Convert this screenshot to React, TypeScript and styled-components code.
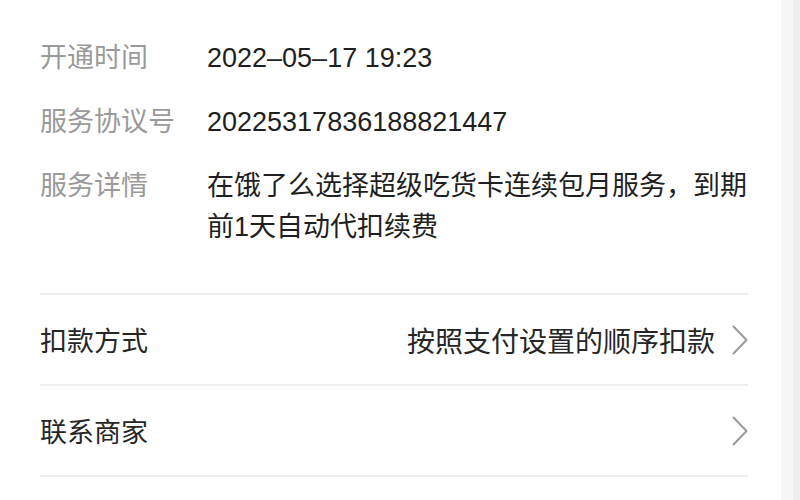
import React from "react";
import styled, { createGlobalStyle } from "styled-components";

const GlobalStyle = createGlobalStyle`
  html, body {
    margin: 0;
    padding: 0;
    background: #ffffff;
  }
  body {
    font-family: "Liberation Sans", "Noto Sans CJK SC", sans-serif;
    -webkit-font-smoothing: antialiased;
  }
`;

const Screen = styled.div`
  display: flex;
  width: 800px;
  height: 500px;
  overflow: hidden;
  background: #ffffff;
`;

const Page = styled.main`
  flex: 1;
  display: flex;
  flex-direction: column;
  padding: 38px 0 0 40px;
  box-sizing: border-box;
`;

const Content = styled.div`
  width: 708px;
  display: flex;
  flex-direction: column;
`;

const InfoList = styled.dl`
  margin: 0;
  padding: 0 0 45px;
  display: grid;
  grid-template-columns: 167px 1fr;
  row-gap: 23px;
  border-bottom: 2px solid #eeeeee;
`;

const InfoLabel = styled.dt`
  margin: 0;
  font-size: 27px;
  line-height: 41px;
  color: #9a9a9a;
`;

const InfoValue = styled.dd`
  margin: 0;
  font-size: 27px;
  line-height: 41px;
  color: #1f1f1f;
`;

const ActionRow = styled.div`
  display: flex;
  align-items: center;
  height: 89px;
  border-bottom: 2px solid #eeeeee;
`;

const ActionLabel = styled.span`
  flex: 1;
  font-size: 27px;
  color: #262626;
`;

const ActionValue = styled.span`
  font-size: 28px;
  color: #262626;
  margin-right: 17px;
`;

const Chevron = styled.svg`
  width: 16px;
  height: 30px;
  flex-shrink: 0;
`;

const EdgeStrip = styled.div`
  width: 19px;
  display: flex;
`;

const EdgeBand = styled.div<{ $tone: string; $w: number }>`
  width: ${(p) => p.$w}px;
  background: ${(p) => p.$tone};
`;

const Arrow = () => (
  <Chevron viewBox="0 0 16 30">
    <path
      d="M1.5 1.5 L14.5 15 L1.5 28.5"
      fill="none"
      stroke="#9a9a9a"
      strokeWidth="2"
      strokeLinecap="round"
      strokeLinejoin="round"
    />
  </Chevron>
);

const info = [
  { label: "开通时间", value: "2022–05–17 19:23" },
  { label: "服务协议号", value: "20225317836188821447" },
  {
    label: "服务详情",
    value: "在饿了么选择超级吃货卡连续包月服务，到期前1天自动代扣续费",
  },
];

const actions = [
  { label: "扣款方式", value: "按照支付设置的顺序扣款" },
  { label: "联系商家", value: "" },
];

export default function App() {
  return (
    <>
      <GlobalStyle />
      <Screen>
        <Page>
          <Content>
            <InfoList>
              {info.map((item) => (
                <React.Fragment key={item.label}>
                  <InfoLabel>{item.label}</InfoLabel>
                  <InfoValue>{item.value}</InfoValue>
                </React.Fragment>
              ))}
            </InfoList>
            {actions.map((a) => (
              <ActionRow key={a.label}>
                <ActionLabel>{a.label}</ActionLabel>
                {a.value && <ActionValue>{a.value}</ActionValue>}
                <Arrow />
              </ActionRow>
            ))}
          </Content>
        </Page>
        <EdgeStrip>
          <EdgeBand $tone="#f6f6f6" $w={12} />
          <EdgeBand $tone="#eeeeee" $w={7} />
        </EdgeStrip>
      </Screen>
    </>
  );
}
